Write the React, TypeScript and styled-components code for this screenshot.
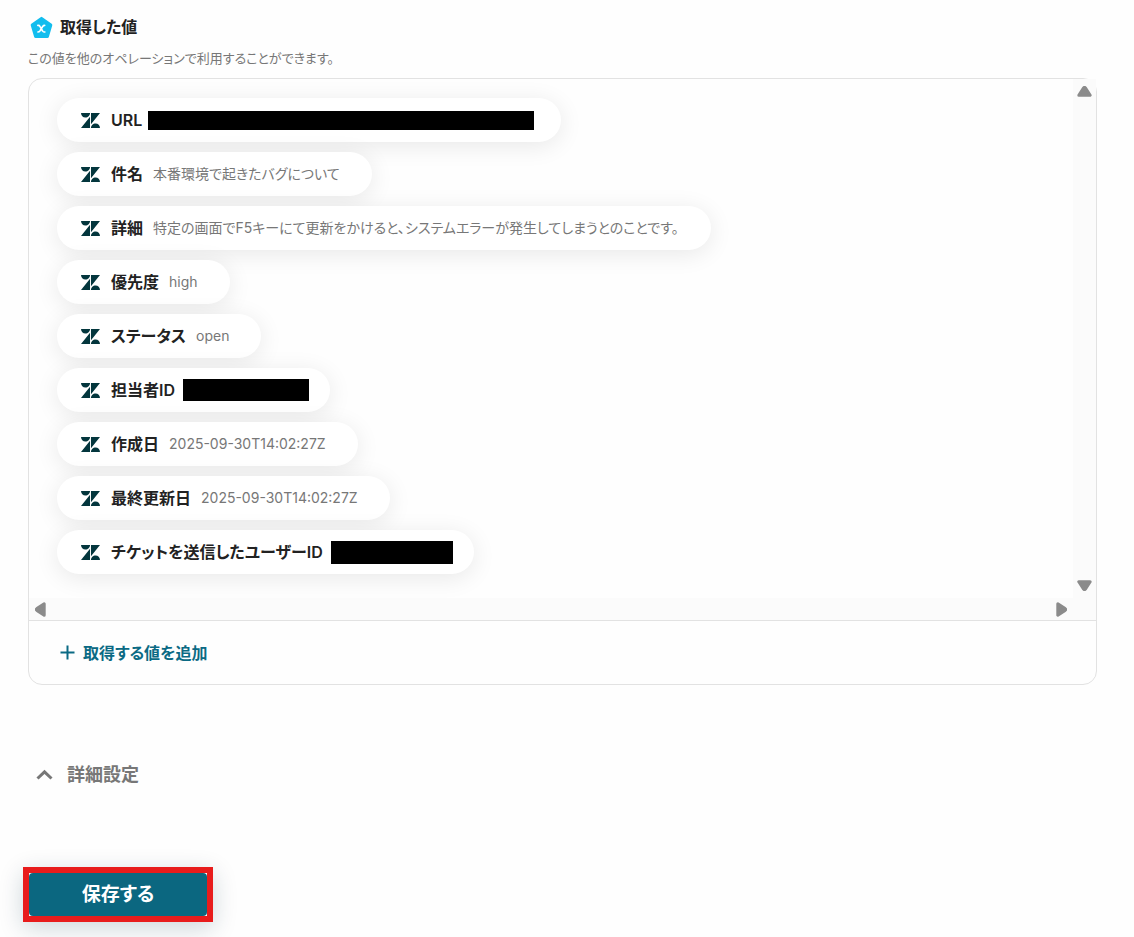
import React from "react";
import styled, { createGlobalStyle } from "styled-components";

const GlobalStyle = createGlobalStyle`
  * { box-sizing: border-box; }
  body {
    margin: 0;
    background: #fefefe;
    color: #222;
    font-family: Inter, "Noto Sans CJK JP", sans-serif;
    font-feature-settings: "palt";
  }
  button { font: inherit; font-feature-settings: inherit; cursor: pointer; }
`;

const Page = styled.main`
  padding: 15px 37px 16px 28px;
`;

const Heading = styled.h2`
  display: flex;
  align-items: center;
  gap: 6px;
  height: 24px;
  margin: 0;
  padding-left: 2px;
  font-size: 16px;
  line-height: 24px;
  font-weight: 600;
`;

const Note = styled.p`
  margin: 9px 0 10px;
  font-size: 13px;
  line-height: 20px;
  color: #777;
`;

const Card = styled.section`
  border: 1px solid #e2e2e2;
  border-radius: 14px;
`;

const ScrollPane = styled.div`
  display: grid;
  grid-template-columns: minmax(0, 1fr) 23px;
  grid-template-rows: auto 22px;
`;

const Chips = styled.ul`
  display: flex;
  flex-direction: column;
  align-items: flex-start;
  gap: 10px;
  margin: 0;
  padding: 19px 28px 24px;
  list-style: none;
  overflow: hidden;
  border-top-left-radius: 13px;
`;

const Chip = styled.li<{ $end?: number }>`
  display: flex;
  align-items: center;
  height: 44px;
  padding: 0 ${(p) => p.$end ?? 32}px 0 24px;
  border-radius: 22px;
  background: #fff;
  box-shadow: 0 4px 24px rgba(0, 0, 0, 0.09);
  white-space: nowrap;
`;

const ChipName = styled.span`
  margin-left: 11px;
  font-size: 16px;
  line-height: 24px;
  font-weight: 600;
`;

const ChipValue = styled.span`
  margin-left: 10px;
  font-size: 14px;
  line-height: 24px;
  color: #777;
`;

const Redaction = styled.span<{ $w: number; $h: number; $gap: number }>`
  width: ${(p) => p.$w}px;
  height: ${(p) => p.$h}px;
  margin-left: ${(p) => p.$gap}px;
  background: #000;
`;

const VTrack = styled.div`
  display: flex;
  flex-direction: column;
  justify-content: space-between;
  align-items: center;
  padding: 7px 0;
  background: #fbfbfb;
`;

const HTrack = styled.div`
  display: flex;
  justify-content: space-between;
  align-items: center;
  padding: 0 6px;
  background: #fbfbfb;
`;

const Corner = styled.div`
  background: #fbfbfb;
`;

const ScrollButton = styled.button`
  display: flex;
  padding: 0;
  border: 0;
  background: none;
`;

const CardFooter = styled.div`
  height: 64px;
  display: flex;
  align-items: center;
  padding: 0 31px;
  border-top: 1px solid #e2e2e2;
`;

const AddButton = styled.button`
  display: flex;
  align-items: center;
  gap: 8px;
  padding: 0;
  border: 0;
  background: none;
  color: #0b6a84;
  font-size: 16px;
  line-height: 24px;
  font-weight: 600;
`;

const Toggle = styled.button`
  display: flex;
  align-items: center;
  gap: 14px;
  margin: 76px 0 78px;
  padding: 0 0 0 8px;
  border: 0;
  background: none;
  color: #777;
  font-size: 18px;
  line-height: 28px;
  font-weight: 600;
`;

const SaveFrame = styled.div`
  display: inline-flex;
  margin-left: -5px;
  border: 6px solid #e81c1c;
  background: #fff;
  box-shadow: 0 6px 24px rgba(10, 50, 70, 0.2);
`;

const SaveButton = styled.button`
  width: 178px;
  height: 43px;
  padding: 0;
  border: 0;
  border-radius: 4px;
  background: #0b6780;
  color: #fff;
  font-size: 19px;
  line-height: 28px;
  font-weight: 700;
`;

const ValueIcon = () => (
  <svg width="24" height="24" viewBox="0 0 24 24" aria-hidden="true">
    <path
      d="M11.5 3.4 L20.8 10 L17.4 21.6 H5.6 L2.2 10 Z"
      fill="#12bdee"
      stroke="#12bdee"
      strokeWidth="3"
      strokeLinejoin="round"
    />
    <path
      d="M7.8 10.4 H8.4 Q9.4 10.4 9.9 11.4 L12.6 16 Q13.1 17 14.1 17 H14.9 M14.7 10.4 Q13.4 10.4 12.7 11.5 L9.9 16 Q9.2 17 7.9 17"
      fill="none"
      stroke="#fff"
      strokeWidth="1.6"
      strokeLinecap="round"
    />
  </svg>
);

const ZendeskIcon = () => (
  <svg width="19" height="15" viewBox="0 2.9 24 18.2" preserveAspectRatio="none" fill="#03363d" aria-hidden="true">
    <path d="M12.6 2.9V16.6L24 2.9H12.6zM0 2.9C0 6 2.5 8.4 5.6 8.4S11.4 6 11.4 2.9H0zM11.4 7.4L0 21.1h11.4V7.4zM18.4 15.6c-3.1 0-5.8 2.4-5.8 5.5H24c0-3.1-2.5-5.5-5.6-5.5z" />
  </svg>
);

const arrowTurn = { up: 0, right: 90, down: 180, left: 270 };

const Arrow = ({ to }: { to: keyof typeof arrowTurn }) => {
  const flat = to === "up" || to === "down";
  return (
    <svg
      width={flat ? 15 : 11}
      height={flat ? 11 : 15}
      viewBox={flat ? "-7.5 -5.5 15 11" : "-5.5 -7.5 11 15"}
      aria-hidden="true"
    >
      <path
        d="M-5.7 3.7 L-0.9 -3.6 Q0 -4.8 0.9 -3.6 L5.7 3.7 Z"
        transform={`rotate(${arrowTurn[to]})`}
        fill="#8b8b8b"
        stroke="#8b8b8b"
        strokeWidth="3"
        strokeLinejoin="round"
      />
    </svg>
  );
};

type Field = {
  name: string;
  value?: string;
  bar?: { w: number; h: number; gap: number; end: number };
};

const fields: Field[] = [
  { name: "URL", bar: { w: 386, h: 19, gap: 6, end: 27 } },
  { name: "件名", value: "本番環境で起きたバグについて" },
  { name: "詳細", value: "特定の画面でF5キーにて更新をかけると、システムエラーが発生してしまうとのことです。" },
  { name: "優先度", value: "high" },
  { name: "ステータス", value: "open" },
  { name: "担当者ID", bar: { w: 126, h: 22, gap: 8, end: 21 } },
  { name: "作成日", value: "2025-09-30T14:02:27Z" },
  { name: "最終更新日", value: "2025-09-30T14:02:27Z" },
  { name: "チケットを送信したユーザーID", bar: { w: 122, h: 23, gap: 8, end: 21 } },
];

export default function App() {
  return (
    <>
      <GlobalStyle />
      <Page>
        <Heading>
          <ValueIcon />
          取得した値
        </Heading>
        <Note>この値を他のオペレーションで利用することができます。</Note>
        <Card>
          <ScrollPane>
            <Chips>
              {fields.map((f) => (
                <Chip key={f.name} $end={f.bar?.end}>
                  <ZendeskIcon />
                  <ChipName>{f.name}</ChipName>
                  {f.value && <ChipValue>{f.value}</ChipValue>}
                  {f.bar && <Redaction $w={f.bar.w} $h={f.bar.h} $gap={f.bar.gap} />}
                </Chip>
              ))}
            </Chips>
            <VTrack>
              <ScrollButton aria-label="上へスクロール"><Arrow to="up" /></ScrollButton>
              <ScrollButton aria-label="下へスクロール"><Arrow to="down" /></ScrollButton>
            </VTrack>
            <HTrack>
              <ScrollButton aria-label="左へスクロール"><Arrow to="left" /></ScrollButton>
              <ScrollButton aria-label="右へスクロール"><Arrow to="right" /></ScrollButton>
            </HTrack>
            <Corner />
          </ScrollPane>
          <CardFooter>
            <AddButton type="button">
              <svg width="15" height="15" viewBox="0 0 15 15" stroke="currentColor" strokeWidth="2" aria-hidden="true">
                <path d="M7.5 0.5V14.5M0.5 7.5H14.5" />
              </svg>
              取得する値を追加
            </AddButton>
          </CardFooter>
        </Card>
        <Toggle type="button" aria-expanded="true">
          <svg width="17" height="12" viewBox="0 0 17 12" fill="none" stroke="currentColor" strokeWidth="3" aria-hidden="true">
            <path d="M1.5 9.5L8.5 2.8L15.5 9.5" />
          </svg>
          詳細設定
        </Toggle>
        <SaveFrame>
          <SaveButton type="button">保存する</SaveButton>
        </SaveFrame>
      </Page>
    </>
  );
}
